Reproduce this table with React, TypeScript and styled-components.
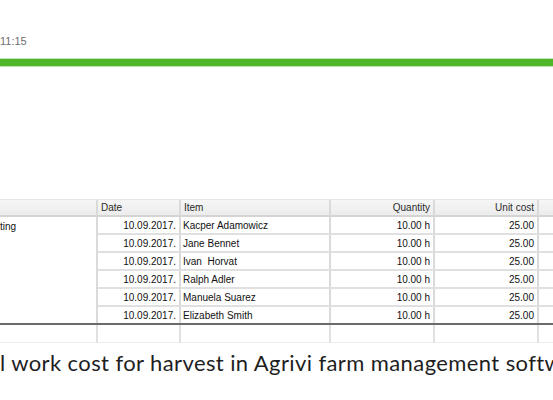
import React from 'react'
import styled, {createGlobalStyle} from 'styled-components'

const GlobalStyle = createGlobalStyle`
  html, body {
    margin: 0;
    padding: 0;
    background: #fff;
    overflow: hidden;
  }
  body {
    width: 553px;
    height: 400px;
  }
`

const Page = styled.div`
  width: 553px;
  height: 400px;
  overflow: hidden;
  display: flex;
  flex-direction: column;
`

const Time = styled.div`
  margin-top: 36px;
  font-family: 'Liberation Sans', Arial, sans-serif;
  font-size: 11px;
  line-height: 11px;
  color: #707070;
`

const GreenBar = styled.div`
  margin-top: 12px;
  height: 7px;
  background: #4fb52a;
  box-shadow: 0 -1px 0 #bfe6ae, 0 1px 0 #bfe6ae;
`

const Grid = styled.div`
  margin-top: 133px;
  display: grid;
  grid-template-columns: 98px 83px 150px 104px 104px 40px;
  font-family: 'Liberation Sans', Arial, sans-serif;
  font-size: 10px;
  color: #111;
  width: 579px;
`

const HeadCell = styled.div<{$right?: boolean}>`
  box-sizing: border-box;
  height: 18px;
  padding: 0 3px;
  line-height: 16px;
  text-align: ${p => (p.$right ? 'right' : 'left')};
  background: linear-gradient(#f6f6f6, #ececec);
  border-top: 1px solid #e6e6e6;
  border-right: 2px solid #dadada;
  border-bottom: 2px solid #d4d4d4;
  color: #2a2a2a;
`

const GroupCell = styled.div`
  box-sizing: border-box;
  grid-row: span 6;
  padding: 3px 0;
  line-height: 13px;
  border-right: 2px solid #dadada;
`

const Cell = styled.div<{$right?: boolean; $last?: boolean}>`
  box-sizing: border-box;
  height: ${p => (p.$last ? 16 : 18)}px;
  padding: 1px 3px 0 2px;
  line-height: 16px;
  white-space: nowrap;
  text-align: ${p => (p.$right ? 'right' : 'left')};
  border-right: 2px solid #dadada;
  border-bottom: ${p => (p.$last ? 'none' : '2px solid #e0e0e0')};
`

const Rule = styled.div`
  grid-column: 1 / -1;
  height: 2px;
  background: #6a6a6a;
`

const EmptyCell = styled.div`
  box-sizing: border-box;
  height: 18px;
  border-right: 2px solid #e0e0e0;
  border-bottom: 1px solid #ececec;
`

const Caption = styled.div`
  margin-top: 7px;
  font-family: Lato, 'Noto Sans', sans-serif;
  font-size: 22px;
  line-height: 26px;
  letter-spacing: 0.4px;
  color: #1e1e1e;
  white-space: nowrap;
`

const rows = [
  'Kacper Adamowicz',
  'Jane Bennet',
  'Ivan\u00a0 Horvat',
  'Ralph Adler',
  'Manuela Suarez',
  'Elizabeth Smith',
]

export default function App() {
  return (
    <Page>
      <GlobalStyle />
      <Time>11:15</Time>
      <GreenBar />
      <Grid>
        <HeadCell />
        <HeadCell>Date</HeadCell>
        <HeadCell>Item</HeadCell>
        <HeadCell $right>Quantity</HeadCell>
        <HeadCell $right>Unit cost</HeadCell>
        <HeadCell />

        <GroupCell>ting</GroupCell>
        {rows.map((name, i) => {
          const last = i === rows.length - 1
          return (
            <React.Fragment key={name}>
              <Cell $right $last={last}>10.09.2017.</Cell>
              <Cell $last={last}>{name}</Cell>
              <Cell $right $last={last}>10.00 h</Cell>
              <Cell $right $last={last}>25.00</Cell>
              <Cell $last={last} />
            </React.Fragment>
          )
        })}
        <Rule />
        {[0, 1, 2, 3, 4, 5].map(i => (
          <EmptyCell key={i} />
        ))}
      </Grid>
      <Caption>l work cost for harvest in Agrivi farm management software</Caption>
    </Page>
  )
}
